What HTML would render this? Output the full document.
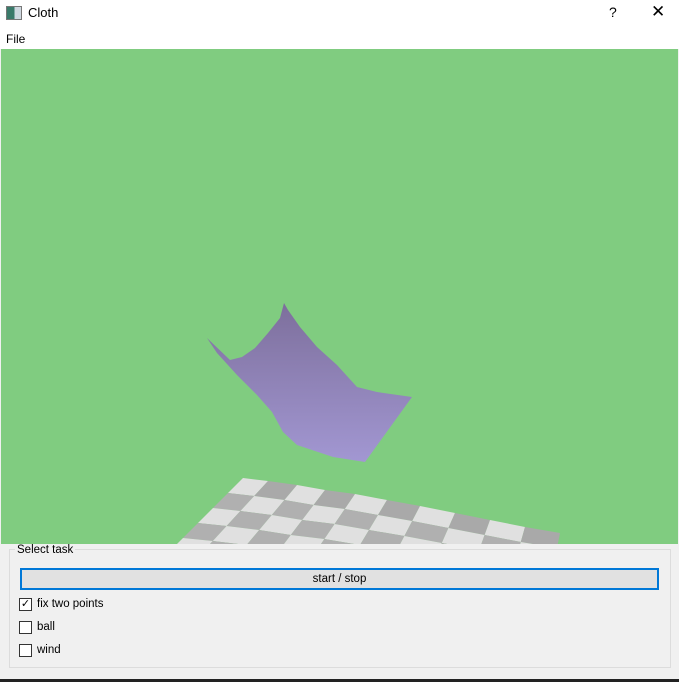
<!DOCTYPE html>
<html><head><style>
body{margin:0;width:679px;height:682px;background:#f0f0f0;position:relative;overflow:hidden;font-family:"Liberation Sans",sans-serif;font-size:12px;color:#000}
.a{position:absolute}
.cb{position:absolute;left:19px;width:11px;height:11px;border:1px solid #333;background:#fff}
.lb{position:absolute;left:37px;font-size:11.5px}
</style></head><body>
<div class="a" style="left:0;top:0;width:679px;height:30px;background:#fff"></div>
<div class="a" style="left:6px;top:6px;width:14px;height:12px;border:1px solid #777;background:linear-gradient(90deg,#3a7a6a 0 55%,#cfd8e0 55%)"></div>
<div class="a" style="left:28px;top:5px;font-size:13px">Cloth</div>
<div class="a" style="left:609px;top:4px;font-size:14px">?</div>
<div class="a" style="left:651px;top:2px;font-size:17px">✕</div>
<div class="a" style="left:0;top:30px;width:679px;height:19px;background:#fff"></div>
<div class="a" style="left:6px;top:32px;font-size:12px">File</div>
<svg class="a" style="left:1px;top:49px" width="677" height="495" viewBox="1 49 677 495">
<defs><linearGradient id="g" x1="0" y1="0" x2="0" y2="1"><stop offset="0" stop-color="#7d6f9c"/><stop offset="1" stop-color="#a297d2"/></linearGradient>
<clipPath id="c"><rect x="1" y="49" width="677" height="495"/></clipPath></defs>
<rect x="1" y="49" width="677" height="495" fill="#80cc80"/>
<g id="board" clip-path="url(#c)"></g>
<polygon fill="url(#g)" points="207,338 230,360 242,357 255,348 268,333 280,318 284,303 288,310 300,327 317,347 337,365 357,387 377,392 412,397 365,462 333,457 297,445 283,432 272,412 257,395 237,375 217,353"/>
</svg>
<script>
var g=document.getElementById('board'),s='';
var X=[243,268,297,325,355,387,420,455,490,525,560],Y=[478,481,485,490,494,500,506,513,520,527,533];
function p(i,j){var vx=-15+12*i/10;return (X[i]+j*vx).toFixed(1)+','+(Y[i]+j*15).toFixed(1)}
for(var j=0;j<5;j++)for(var i=0;i<10;i++){var c=(i+j)%2==0?'#e0e0e0':(j<1?'#a9a9a9':'#b0b0b0');
s+='<polygon fill="'+c+'" points="'+p(i,j)+' '+p(i+1,j)+' '+p(i+1,j+1)+' '+p(i,j+1)+'"/>';}
g.innerHTML=s;
</script>
<div class="a" style="left:9px;top:549px;width:660px;height:117px;border:1px solid #dcdcdc"></div>
<div class="a" style="left:15px;top:544px;background:#f0f0f0;padding:0 2px;font-size:11.5px">Select task</div>
<div class="a" style="left:20px;top:568px;width:635px;height:18px;border:2px solid #0078d7;background:#e1e1e1;text-align:center;line-height:18px;font-size:11.5px">start / stop</div>
<div class="cb" style="top:598px;text-align:center;line-height:11px;font-size:11px">✓</div><div class="lb" style="top:598px">fix two points</div>
<div class="cb" style="top:621px"></div><div class="lb" style="top:621px">ball</div>
<div class="cb" style="top:644px"></div><div class="lb" style="top:644px">wind</div>
<div class="a" style="left:0;top:679px;width:679px;height:3px;background:#222"></div>
</body></html>
